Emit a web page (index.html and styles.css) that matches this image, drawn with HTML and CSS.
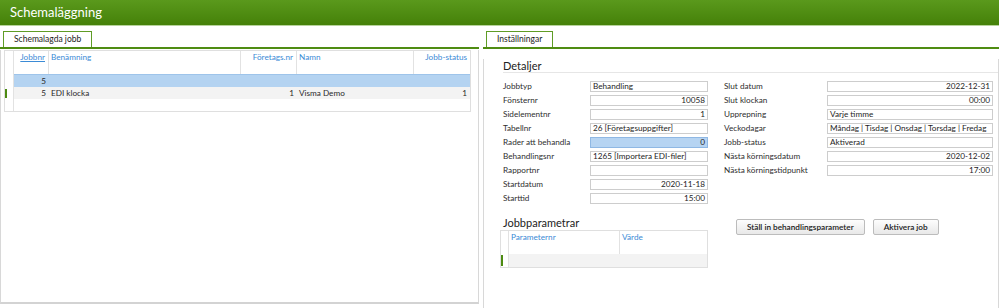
FILE: index.html
```html
<!DOCTYPE html>
<html lang="sv">
<head>
    <meta charset="UTF-8">
    <title>Schemaläggning</title>
    <link rel="stylesheet" href="styles.css">
</head>
<body>
    <header class="titlebar">Schemaläggning</header>

    <main class="workspace">
        <!-- Left: list of scheduled jobs -->
        <section class="panel panel-left">
            <div class="tabs">
                <div class="tab">Schemalagda jobb</div>
            </div>
            <div class="panel-body">
                <div class="grid jobs-grid">
                    <div class="grid-row grid-head">
                        <span class="sel"></span>
                        <span class="right"><u>Jobbnr</u></span>
                        <span>Benämning</span>
                        <span class="right">Företags.nr</span>
                        <span>Namn</span>
                        <span class="right">Jobb-status</span>
                    </div>
                    <div class="grid-row is-selected">
                        <span class="sel"></span>
                        <span class="right">5</span>
                        <span></span>
                        <span></span>
                        <span></span>
                        <span></span>
                    </div>
                    <div class="grid-row is-current">
                        <span class="sel"><i class="marker"></i></span>
                        <span class="right">5</span>
                        <span>EDI klocka</span>
                        <span class="right">1</span>
                        <span>Visma Demo</span>
                        <span class="right">1</span>
                    </div>
                    <div class="grid-row is-new">
                        <span class="sel"></span>
                        <span></span>
                        <span></span>
                        <span></span>
                        <span></span>
                        <span></span>
                    </div>
                </div>
            </div>
        </section>

        <!-- Right: settings for the selected job -->
        <section class="panel panel-right">
            <div class="tabs">
                <div class="tab">Inställningar</div>
            </div>
            <div class="panel-body settings">
                <h2 class="section-title">Detaljer</h2>
                <div class="fields">
                    <div class="field-col col-a">
                        <label>Jobbtyp</label><div class="field-input">Behandling</div>
                        <label>Fönsternr</label><div class="field-input right">10058</div>
                        <label>Sidelementnr</label><div class="field-input right">1</div>
                        <label>Tabellnr</label><div class="field-input">26 [Företagsuppgifter]</div>
                        <label>Rader att behandla</label><div class="field-input right is-focused">0</div>
                        <label>Behandlingsnr</label><div class="field-input">1265 [Importera EDI-filer]</div>
                        <label>Rapportnr</label><div class="field-input"></div>
                        <label>Startdatum</label><div class="field-input right">2020-11-18</div>
                        <label>Starttid</label><div class="field-input right">15:00</div>
                    </div>
                    <div class="field-col col-b">
                        <label>Slut datum</label><div class="field-input right">2022-12-31</div>
                        <label>Slut klockan</label><div class="field-input right">00:00</div>
                        <label>Upprepning</label><div class="field-input">Varje timme</div>
                        <label>Veckodagar</label><div class="field-input">Måndag | Tisdag | Onsdag | Torsdag | Fredag</div>
                        <label>Jobb-status</label><div class="field-input">Aktiverad</div>
                        <label>Nästa körningsdatum</label><div class="field-input right">2020-12-02</div>
                        <label>Nästa körningstidpunkt</label><div class="field-input right">17:00</div>
                    </div>
                </div>

                <div class="lower">
                    <div class="params">
                        <h2 class="section-title plain">Jobbparametrar</h2>
                        <div class="grid params-grid">
                            <div class="grid-row grid-head">
                                <span class="sel"></span>
                                <span>Parameternr</span>
                                <span>Värde</span>
                            </div>
                            <div class="grid-row is-current">
                                <span class="sel"><i class="marker"></i></span>
                                <span></span>
                                <span></span>
                            </div>
                        </div>
                    </div>
                    <div class="actions">
                        <button>Ställ in behandlingsparameter</button>
                        <button>Aktivera job</button>
                    </div>
                </div>
            </div>
        </section>
    </main>
</body>
</html>
```

FILE: styles.css
```css
body {
    margin: 0;
    width: 999px;
    height: 308px;
    overflow: hidden;
    background-color: #fff;
    color: #2a2a2a;
    font-family: Lato, "Open Sans", sans-serif;
    font-size: 8.2px;
}

.titlebar {
    height: 25px;
    padding-left: 10px;
    background: linear-gradient(#5a991c, #458109);
    border-bottom: 1px solid #b7d39c;
    color: #fff;
    font-size: 13px;
    line-height: 25px;
}

.workspace {
    display: flex;
    gap: 4px;
}

.panel-left {
    width: 479px;
}

.panel-right {
    flex: 1;
}

/* Tabs */
.tabs {
    display: flex;
    height: 16px;
    margin-top: 5px;
    padding-left: 3px;
    border-bottom: 2px solid #4f8c12;
}

.tab {
    padding: 0 10px;
    border: 1px solid #5f9c25;
    border-bottom: none;
    background-color: #fff;
    color: #222;
    font-size: 8.5px;
    line-height: 15px;
}

.panel-body {
    height: 252px;
    border: 1px solid #d8d8d8;
    border-top: none;
    border-bottom: 2px solid #d3d3d3;
}

/* Data grids */
.grid {
    border: 1px solid #dfdfdf;
    background-color: #fff;
}

.grid-row {
    display: grid;
    line-height: 12px;
}

.grid-row span {
    padding: 0 3px 0 2px;
    white-space: nowrap;
    overflow: hidden;
}

.grid-row .right {
    text-align: right;
}

.grid-row .sel {
    padding: 0;
    border-right: 1px solid #e2e2e2;
}

.grid-head {
    height: 23px;
    color: #3b8bd6;
}

.grid-head span {
    padding-top: 1px;
    line-height: 11px;
    border-right: 1px solid #e2e2e2;
}

.grid-head span:last-child {
    border-right: none;
}

.jobs-grid {
    width: 465px;
    margin: 1px 0 0 3px;
}

.jobs-grid .grid-row {
    grid-template-columns: 9px 35px 192px 56px 117px 56px;
}

.is-selected {
    height: 13px;
}

.is-selected span:not(.sel) {
    background-color: #b4d3f1;
    border-top: 1px solid #9ec4ea;
    line-height: 12px;
}

.is-current {
    height: 12px;
}

.is-current span:not(.sel) {
    background-color: #f3f3f3;
}

.is-new {
    height: 12px;
}

.marker {
    display: block;
    width: 2px;
    height: 9px;
    margin-top: 2px;
    background-color: #4d8b12;
}

/* Settings panel */
.settings {
    padding-left: 19px;
}

.section-title {
    margin: 10px 0 0 0;
    border-bottom: 1px solid #e6e6e6;
    color: #222;
    font-size: 11px;
    font-weight: normal;
    line-height: 13px;
}

.section-title.plain {
    margin: 0;
    padding-left: 3px;
    border-bottom: none;
}

.fields {
    display: flex;
    gap: 16px;
    margin-top: 7px;
}

.field-col {
    display: grid;
    grid-auto-rows: 14px;
}

.col-a {
    grid-template-columns: 87px 118px;
}

.col-b {
    grid-template-columns: 103px 166px;
}

.field-col label {
    color: #2e2e2e;
    line-height: 12px;
    white-space: nowrap;
}

.field-input {
    height: 11px;
    margin-top: 1px;
    padding: 0 2px;
    box-sizing: border-box;
    border: 1px solid #cdcdcd;
    background-color: #fff;
    color: #1e1e1e;
    line-height: 9px;
    white-space: nowrap;
    overflow: hidden;
}

.field-input.right {
    text-align: right;
}

.field-input.is-focused {
    background-color: #b6d4f2;
    border-color: #8fb8e4;
}

.lower {
    display: flex;
    margin-top: 10px;
}

.params {
    width: 208px;
    margin-left: -3px;
}

.params-grid {
    margin-top: 1px;
}

.params-grid .grid-row {
    grid-template-columns: 8px 111px 87px;
}

.params-grid .is-current {
    height: 13px;
}

.params-grid .marker {
    height: 11px;
    margin-top: 1px;
}

.actions {
    display: flex;
    gap: 8px;
    margin: 3px 0 0 28px;
    align-items: flex-start;
}

button {
    height: 16px;
    padding: 0 10px;
    border: 1px solid #bcbcbc;
    border-radius: 2px;
    background: linear-gradient(#fdfdfd, #e8e8e8);
    color: #1a1a1a;
    font-family: inherit;
    font-size: 8.2px;
    font-weight: 600;
    cursor: pointer;
}
```
